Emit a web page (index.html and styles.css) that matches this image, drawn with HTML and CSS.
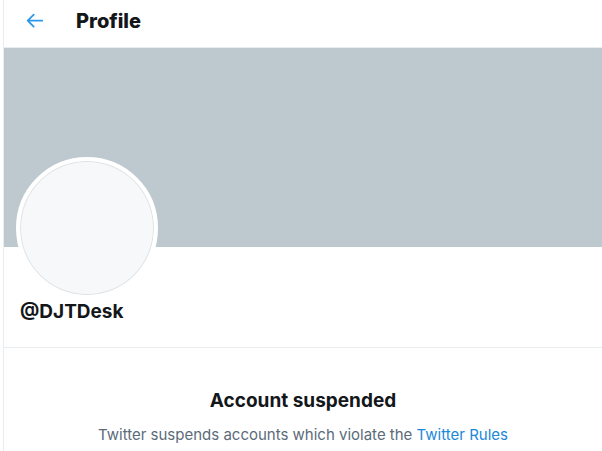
FILE: index.html
```html
<!DOCTYPE html>
<html lang="en">
<head>
<meta charset="utf-8">
<title>Profile</title>
<link rel="stylesheet" href="styles.css">
</head>
<body>
<main class="column">
  <header class="topbar">
    <button class="back" type="button" aria-label="Back">
      <svg viewBox="0 0 22 22" width="22" height="22" aria-hidden="true"><path d="M18.2 10.7H4M9.7 4.7L3.7 10.7L9.7 16.7"/></svg>
    </button>
    <h1 class="title">Profile</h1>
  </header>
  <div class="banner"></div>
  <section class="profile">
    <div class="avatar"></div>
    <h2 class="handle">@DJTDesk</h2>
  </section>
  <section class="notice">
    <h2 class="notice-title">Account suspended</h2>
    <p class="notice-text">Twitter suspends accounts which violate the <a href="#">Twitter Rules</a></p>
  </section>
</main>
</body>
</html>
```
FILE: styles.css
```css
* {
  box-sizing: border-box;
}

body {
  margin: 0;
  background: #fff;
  color: #14171a;
  font-family: Inter, "Liberation Sans", sans-serif;
}

h1, h2, p {
  margin: 0;
}

.column {
  margin-left: 3px;
  border-left: 1px solid #e9edf0;
  min-height: 100vh;
}

.topbar {
  display: flex;
  align-items: center;
  gap: 30px;
  height: 48px;
  padding: 0 20px 6px;
  border-bottom: 1px solid #e6ecf0;
}

.back {
  display: flex;
  padding: 0;
  border: 0;
  background: none;
  cursor: pointer;
}

.back svg {
  fill: none;
  stroke: #2b98ea;
  stroke-width: 1.8;
  stroke-linecap: round;
  stroke-linejoin: round;
}

.title {
  font-size: 20px;
  line-height: 24px;
  font-weight: 800;
}

.banner {
  height: 199px;
  background: #bdc9ce;
}

.profile {
  padding: 0 12px 22px;
  border-bottom: 1px solid #e9edf0;
}

.avatar {
  width: 142px;
  height: 142px;
  margin-top: -90px;
  border: 4px solid #fff;
  border-radius: 50%;
  background: #f6f8fa;
  box-shadow: inset 0 0 0 1px #dfe3e6;
}

.handle {
  padding-left: 4px;
  font-size: 19px;
  line-height: 26px;
  font-weight: 700;
}

.notice {
  padding: 40px 20px 0;
  text-align: center;
}

.notice-title {
  font-size: 19px;
  line-height: 26px;
  font-weight: 700;
}

.notice-text {
  margin-top: 11px;
  color: #5b6b7a;
  font-size: 15px;
  line-height: 20px;
}

.notice-text a {
  color: #1b88d8;
  text-decoration: none;
}
```
